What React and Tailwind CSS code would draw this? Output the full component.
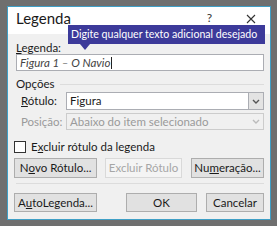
import React from 'react';

const font = { fontFamily: 'Lato, "Noto Sans", sans-serif' };

const Btn = ({ children, className = '', disabled }) => (
  <div
    className={
      'flex items-center justify-center border text-[11.5px] ' +
      (disabled
        ? 'bg-[#f4f4f4] border-[#d9d9d9] text-[#a6a6a6] '
        : 'bg-[#e1e1e1] border-[#adadad] text-[#1a1a1a] ') +
      className
    }
  >
    {children}
  </div>
);

const Chevron = ({ color }) => (
  <svg width="8" height="5" viewBox="0 0 8 5">
    <path d="M1 1 L4 4 L7 1" fill="none" stroke={color} strokeWidth="1.4" />
  </svg>
);

export default function App() {
  return (
    <div className="w-[277px] h-[226px] bg-[#6f6f6f] pt-[6px] pl-[7px]" style={font}>
      <div className="relative w-[264px] h-[214px] border border-[#3f9fc6] bg-[#f0f0f0] flex flex-col">
        {/* Title bar */}
        <div className="h-[27px] bg-white flex items-start pt-[2px] pl-2 pr-[14px] shrink-0">
          <span className="text-[15px] text-[#1a1a1a] leading-[18px]">Legenda</span>
          <span className="ml-auto text-[12px] leading-[18px] text-[#333] mr-[34px]">?</span>
          <svg width="10" height="10" viewBox="0 0 10 10" className="mt-[5px]">
            <path d="M1 1 L9 9 M9 1 L1 9" stroke="#333" strokeWidth="1.1" />
          </svg>
        </div>

        {/* Tooltip */}
        <div className="absolute left-[60px] top-[18px] w-[197px] h-[19px] bg-[#3c3a9a] flex items-center pl-[3px] overflow-visible">
          <span className="text-[10.6px] text-white whitespace-nowrap">Digite qualquer texto adicional desejado</span>
          <div className="absolute left-[12px] top-[19px] w-0 h-0 border-l-[5px] border-r-[5px] border-t-[6px] border-l-transparent border-r-transparent border-t-[#3c3a9a]" />
        </div>

        {/* Body */}
        <div className="flex flex-col pl-2 pr-[6px] pt-[7px] pb-2 flex-1 text-[11.5px]">
          <div className="leading-[13px] text-[#1a1a1a]">
            <span className="underline">L</span>egenda:
          </div>
          <div className="h-[17px] bg-white border border-[#abadb3] flex items-center pl-[3px]">
            <span className="italic text-[#444]">Figura 1 – O Navio</span>
            <span className="w-px h-[12px] bg-[#222] ml-px" />
          </div>

          <div className="mt-[6px] h-[14px] flex items-center">
            <span className="text-[#1a1a1a]">Opções</span>
            <div className="flex-1 h-px bg-[#dcdcdc] ml-[5px]" />
          </div>

          <div className="mt-px pl-[5px] flex items-center h-[18px]">
            <span className="w-[45px] text-[#1a1a1a]">
              <span className="underline">R</span>ótulo:
            </span>
            <div className="flex-1 h-full bg-white border border-[#abadb3] flex items-center">
              <span className="pl-[3px] text-[#1a1a1a] flex-1">Figura</span>
              <div className="w-[15px] h-full bg-[#e3e3e3] border-l border-[#abadb3] flex items-center justify-center">
                <Chevron color="#555" />
              </div>
            </div>
          </div>

          <div className="mt-[3px] pl-[5px] flex items-center h-[17px]">
            <span className="w-[45px] text-[#9a9a9a]">Posição:</span>
            <div className="flex-1 h-full bg-[#f0f0f0] border border-[#cccccc] flex items-center">
              <span className="pl-[3px] text-[#9a9a9a] flex-1">Abaixo do item selecionado</span>
              <div className="w-[15px] h-full flex items-center justify-center">
                <Chevron color="#bbb" />
              </div>
            </div>
          </div>

          <div className="mt-[11px] flex items-center h-[12px]">
            <div className="w-[12px] h-[12px] bg-white border border-[#333] ml-[-2px]" />
            <span className="ml-[5px] text-[#1a1a1a]">
              E<span className="underline">x</span>cluir rótulo da legenda
            </span>
          </div>

          <div className="mt-[5px] flex h-[20px] ml-[-2px]">
            <Btn className="w-[83px]">
              N<span className="underline">o</span>vo Rótulo...
            </Btn>
            <Btn disabled className="w-[77px] ml-[8px]">Excluir Rótulo</Btn>
            <Btn className="w-[73px] ml-auto">
              Nu<span className="underline">m</span>eração...
            </Btn>
          </div>

          <div className="mt-[5px] h-px bg-[#dcdcdc]" />

          <div className="mt-[9px] flex h-[19px] ml-[-2px]">
            <Btn className="w-[83px]">
              A<span className="underline">u</span>toLegenda...
            </Btn>
            <Btn className="w-[71px] ml-auto border-[#3c8fd6]">OK</Btn>
            <Btn className="w-[58px] ml-[9px]">Cancelar</Btn>
          </div>
        </div>
      </div>
    </div>
  );
}
